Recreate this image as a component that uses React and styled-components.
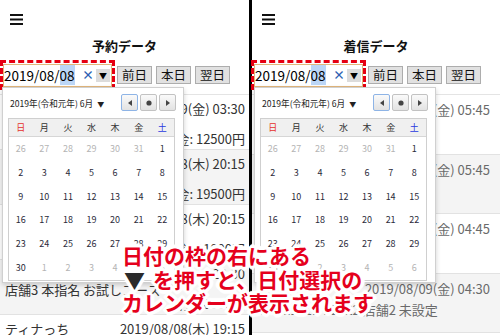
import React from 'react';
import styled, { createGlobalStyle } from 'styled-components';

// Базові стилі сторінки
const GlobalStyle = createGlobalStyle`
  body {
    margin: 0;
    font-family: "Noto Sans CJK JP", "Noto Sans", sans-serif;
    color: #333;
  }
`;

const Page = styled.div`
  position: relative;
  width: 500px;
  height: 335px;
  overflow: hidden;
  display: flex;
  background: #fff;
`;

const Panel = styled.div`
  position: relative;
  width: ${(p) => p.$w}px;
  flex-shrink: 0;
`;

const Divider = styled.div`
  width: 3px;
  background: #000;
  flex-shrink: 0;
`;

const TopBar = styled.div`
  height: 24px;
  padding: 6px 0 0 10px;
  box-sizing: border-box;
`;

const Title = styled.h2`
  margin: 13px 0 0;
  font-size: 13px;
  line-height: 18px;
  font-weight: bold;
  text-align: center;
  color: #111;
`;

const DateRow = styled.div`
  display: flex;
  align-items: center;
  margin-top: 5px;
  height: 30px;
  margin-left: ${(p) => p.$shift || 0}px;
`;

// Червона пунктирна рамка навколо поля дати
const DashFrame = styled.div`
  box-sizing: border-box;
  width: 115px;
  height: 30px;
  border: 3px dashed #e60012;
  display: flex;
  align-items: center;
`;

const DateInput = styled.div`
  box-sizing: border-box;
  width: 109px;
  height: 23px;
  border: 1px solid #e3b77c;
  display: flex;
  align-items: center;
  background: #fff;
`;

const DateText = styled.span`
  font-size: 13.5px;
  color: #000;
  line-height: 17px;
`;

const Selected = styled.span`
  background: #bcd6f6;
`;

const ClearMark = styled.span`
  margin-left: auto;
  color: #2f5fb3;
  font-size: 12px;
  font-weight: bold;
  line-height: 12px;
`;

const DropBox = styled.span`
  width: 14px;
  height: 13px;
  margin: 0 1px 0 2px;
  background: #dcdcdc;
  font-size: 8px;
  line-height: 13px;
  text-align: center;
  color: #000;
`;

const DayButton = styled.button`
  height: 18px;
  padding: 0 4px;
  margin-left: ${(p) => (p.$first ? 2 : 4)}px;
  font-family: inherit;
  font-size: 12.5px;
  line-height: 16px;
  color: #111;
  background: #e1e1e1;
  border: 1px solid #adadad;
  border-radius: 0;
`;

const List = styled.div`
  margin-top: 4px;
  border-top: 1px solid #e4e4e4;
`;

const Row = styled.div`
  box-sizing: border-box;
  height: ${(p) => p.$h}px;
  padding: ${(p) => p.$pad};
  background: ${(p) => (p.$alt ? '#f4f4f4' : '#fff')};
  border-bottom: 1px solid #e2e2e2;
  color: ${(p) => p.$color};
  font-size: 13px;
`;

const Line = styled.div`
  display: flex;
  justify-content: space-between;
  height: ${(p) => p.$h}px;
  line-height: ${(p) => p.$h}px;
  margin-top: ${(p) => p.$mt || 0}px;
  white-space: nowrap;
`;

const RightText = styled.span`
  margin-left: auto;
`;

// Спливаючий календар над списком
const Popup = styled.div`
  position: absolute;
  top: 87px;
  left: 2px;
  width: 182px;
  height: 196px;
  box-sizing: border-box;
  background: #fff;
  border: 1px solid #d0d0d0;
  box-shadow: 0 2px 5px rgba(0, 0, 0, 0.18);
`;

const CalHead = styled.div`
  display: flex;
  align-items: center;
  height: 17px;
  margin-top: 6px;
  padding: 0 7px 0 7px;
`;

const MonthLabel = styled.span`
  font-size: 8.6px;
  color: #222;
  white-space: nowrap;
`;

const Caret = styled.span`
  font-size: 7px;
  margin-left: 4px;
`;

const NavGroup = styled.div`
  margin-left: auto;
  display: flex;
  gap: 2px;
`;

const NavButton = styled.div`
  box-sizing: border-box;
  width: 17px;
  height: 17px;
  border: 1px solid ${(p) => (p.$focus ? '#8eb4e6' : '#c2c2c2')};
  border-radius: 2px;
  background: linear-gradient(#fafafa, #e2e2e2);
  display: flex;
  align-items: center;
  justify-content: center;
`;

const CalGrid = styled.div`
  margin: 7px 8px 0 5px;
  border: 1px solid #cfcfcf;
  display: grid;
  grid-template-columns: repeat(7, 1fr);
`;

const WeekCell = styled.div`
  height: 17px;
  line-height: 17px;
  background: #f0f0f0;
  border-bottom: 1px solid #d6d6d6;
  text-align: center;
  font-size: 9px;
  color: ${(p) => p.$color};
`;

const DayCell = styled.div`
  height: 23.8px;
  line-height: 23.8px;
  text-align: center;
  font-size: 9px;
  color: ${(p) => (p.$dim ? '#b4b4b4' : '#2a2a3a')};
`;

// Червоний підпис-пояснення поверх скріншота
const Note = styled.div`
  position: absolute;
  left: 122px;
  top: 244px;
  font-size: 21px;
  line-height: 23.5px;
  font-weight: bold;
  color: #e5001c;
  white-space: nowrap;
  text-shadow:
    2px 0 0 #fff, -2px 0 0 #fff, 0 2px 0 #fff, 0 -2px 0 #fff,
    2px 2px 0 #fff, -2px 2px 0 #fff, 2px -2px 0 #fff, -2px -2px 0 #fff,
    3px 1px 0 #fff, -3px 1px 0 #fff, 1px 3px 0 #fff, -1px 3px 0 #fff,
    3px -1px 0 #fff, -3px -1px 0 #fff, 1px -3px 0 #fff, -1px -3px 0 #fff,
    0 4px 1px #fff, 0 -4px 1px #fff, 4px 0 1px #fff, -4px 0 1px #fff;
`;

const NoteArrow = styled.span`
  color: #2b2b2b;
  margin: 0 8px 0 2px;
`;

const Hamburger = () => (
  <svg width="13" height="11" viewBox="0 0 13 11">
    <rect x="0" y="0" width="13" height="2" fill="#111" />
    <rect x="0" y="4.5" width="13" height="2" fill="#111" />
    <rect x="0" y="9" width="13" height="2" fill="#111" />
  </svg>
);

const weekDays = [
  ['日', '#e5322d'],
  ['月', '#333'],
  ['火', '#333'],
  ['水', '#333'],
  ['木', '#333'],
  ['金', '#333'],
  ['土', '#2a3ae0'],
];

// Червень 2019: дні з сусідніх місяців позначені dim
const days = [
  ...[26, 27, 28, 29, 30, 31].map((d) => ({ d, dim: true })),
  ...Array.from({ length: 30 }, (_, i) => ({ d: i + 1 })),
  ...[1, 2, 3, 4, 5, 6].map((d) => ({ d, dim: true })),
];

const Calendar = () => (
  <Popup>
    <CalHead>
      <MonthLabel>
        2019年(令和元年) 6月<Caret>▼</Caret>
      </MonthLabel>
      <NavGroup>
        <NavButton $focus>
          <svg width="4" height="6" viewBox="0 0 4 6"><path d="M4 0 L0 3 L4 6 Z" fill="#444" /></svg>
        </NavButton>
        <NavButton>
          <svg width="6" height="6" viewBox="0 0 6 6"><circle cx="3" cy="3" r="2.6" fill="#444" /></svg>
        </NavButton>
        <NavButton>
          <svg width="4" height="6" viewBox="0 0 4 6"><path d="M0 0 L4 3 L0 6 Z" fill="#444" /></svg>
        </NavButton>
      </NavGroup>
    </CalHead>
    <CalGrid>
      {weekDays.map(([w, c]) => (
        <WeekCell key={w} $color={c}>{w}</WeekCell>
      ))}
      {days.map((x, i) => (
        <DayCell key={i} $dim={x.dim}>{x.d}</DayCell>
      ))}
    </CalGrid>
  </Popup>
);

const DateControls = ({ shift }) => (
  <DateRow $shift={shift}>
    <DashFrame>
      <DateInput>
        <DateText>
          2019/08/<Selected>08</Selected>
        </DateText>
        <ClearMark>×</ClearMark>
        <DropBox>▼</DropBox>
      </DateInput>
    </DashFrame>
    <DayButton $first>前日</DayButton>
    <DayButton>本日</DayButton>
    <DayButton>翌日</DayButton>
  </DateRow>
);

const reservations = [
  { name: 'みさき', time: '2019/08/09(金) 03:30', info: '店舗1 本指名 ロングコース', price: '料金: 12500円' },
  { name: 'あやね', time: '2019/08/08(木) 20:15', info: '店舗2 写真指名 90分コース', price: '料金: 19500円' },
  { name: 'ゆうか', time: '2019/08/08(木) 20:15', info: '店舗1 フリー 60分コース', price: '料金: 11000円' },
  { name: 'りな', time: '2019/08/08(木) 20:30', info: '店舗3 本指名 お試しコース', price: '料金: 8000円' },
  { name: 'ティナっち', time: '2019/08/08(木) 19:15', info: '', price: '' },
];

const calls = [
  { name: '090-1234-5678', time: '2019/08/09(金) 05:45', info: '店舗1 未設定' },
  { name: '080-2345-6789', time: '2019/08/09(金) 05:45', info: '店舗1 未設定' },
  { name: '070-3456-7890', time: '2019/08/09(金) 04:45', info: '店舗2 未設定' },
  { name: '非通知', time: '2019/08/09(金) 04:30', info: '090-11111-22222 店舗2 未設定' },
];

const App = () => {
  return (
    <Page>
      <GlobalStyle />

      {/* Ліва панель: дані бронювань */}
      <Panel $w={249}>
        <TopBar><Hamburger /></TopBar>
        <Title>予約データ</Title>
        <DateControls />
        <List>
          {reservations.map((r, i) => (
            <Row key={i} $h={55} $pad="6px 4px 0 5px" $alt={i % 2 === 1} $color="#333">
              <Line $h={16}>
                <span>{r.name}</span>
                <RightText>{r.time}</RightText>
              </Line>
              <Line $h={16}><span>{r.info}</span></Line>
              <Line $h={12}><RightText>{r.price}</RightText></Line>
            </Row>
          ))}
        </List>
        <Calendar />
      </Panel>

      <Divider />

      {/* Права панель: вхідні дзвінки */}
      <Panel $w={248}>
        <TopBar><Hamburger /></TopBar>
        <Title>着信データ</Title>
        <DateControls shift={-1} />
        <List>
          {calls.map((c, i) => (
            <Row key={i} $h={59.5} $pad="7px 10px 0 5px" $alt={i % 2 === 1} $color="#6a6a6a">
              <Line $h={16}>
                <span>{c.name}</span>
                <RightText>{c.time}</RightText>
              </Line>
              <Line $h={16} $mt={5}><span>{c.info}</span></Line>
            </Row>
          ))}
        </List>
        <Calendar />
      </Panel>

      <Note>
        日付の枠の右にある<br />
        <NoteArrow>▼</NoteArrow>を押すと、日付選択の<br />
        カレンダーが表示されます
      </Note>
    </Page>
  );
};

export default App;
